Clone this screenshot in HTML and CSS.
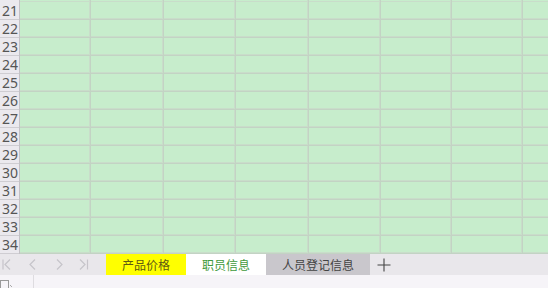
FILE: index.html
```html
<!DOCTYPE html>
<html>
<head>
<meta charset="utf-8">
<link rel="stylesheet" href="styles.css">
</head>
<body>
<div class="app">
  <div class="sheet">
    <div class="rowhead">
      <div class="hcell top"></div>
      <div class="hcell"><span>21</span></div>
      <div class="hcell"><span>22</span></div>
      <div class="hcell"><span>23</span></div>
      <div class="hcell"><span>24</span></div>
      <div class="hcell"><span>25</span></div>
      <div class="hcell"><span>26</span></div>
      <div class="hcell"><span>27</span></div>
      <div class="hcell"><span>28</span></div>
      <div class="hcell"><span>29</span></div>
      <div class="hcell"><span>30</span></div>
      <div class="hcell"><span>31</span></div>
      <div class="hcell"><span>32</span></div>
      <div class="hcell"><span>33</span></div>
      <div class="hcell"><span>34</span></div>
    </div>
    <div class="grid" id="grid"></div>
  </div>
  <div class="tabbar">
    <div class="nav">
      <svg class="navicon" width="106" height="21" viewBox="0 0 106 21">
        <g fill="none" stroke="#c6c4ca" stroke-width="1.2">
          <path d="M3 5.5 V15.5"/>
          <path d="M10 5.5 L5 10.5 L10 15.5"/>
          <path d="M35 5.5 L30 10.5 L35 15.5"/>
          <path d="M57 5.5 L62 10.5 L57 15.5"/>
          <path d="M80 5.5 L85 10.5 L80 15.5"/>
          <path d="M87.5 5.5 V15.5"/>
        </g>
      </svg>
    </div>
    <div class="tab tab-yellow">产品价格</div>
    <div class="tab tab-white">职员信息</div>
    <div class="tab tab-grey">人员登记信息</div>
    <div class="plus">
      <svg width="14" height="14" viewBox="0 0 14 14">
        <path d="M7 0.5 V13.5 M0.5 7 H13.5" stroke="#444" stroke-width="1.1" fill="none"/>
      </svg>
    </div>
  </div>
  <div class="status">
    <div class="stat-icon">
      <svg width="16" height="13" viewBox="0 0 16 13">
        <rect x="1.5" y="5.5" width="8" height="8" fill="none" stroke="#999" stroke-width="1"/>
        <path d="M11 10 L13 12" stroke="#aaa" stroke-width="1"/>
      </svg>
    </div>
    <div class="stat-div"></div>
  </div>
</div>
<script>
(function(){
  var g=document.getElementById('grid');
  var html='<div class="grow top">';
  for(var c=0;c<8;c++) html+='<div class="gcell"></div>';
  html+='</div>';
  for(var r=0;r<14;r++){
    html+='<div class="grow">';
    for(var c=0;c<8;c++) html+='<div class="gcell"></div>';
    html+='</div>';
  }
  g.innerHTML=html;
})();
</script>
</body>
</html>
```
FILE: styles.css
```css
html, body {
  margin: 0;
  padding: 0;
  width: 548px;
  height: 288px;
  overflow: hidden;
  background: #f6f4f8;
}
.app {
  width: 548px;
  height: 288px;
  display: flex;
  flex-direction: column;
  font-family: "Noto Sans", "Noto Sans CJK SC", sans-serif;
}
.sheet {
  height: 254px;
  display: flex;
  overflow: hidden;
}
.rowhead {
  width: 20px;
  flex: none;
  background: #ebe9ee;
  border-right: 1px solid #c3c1c6;
  box-sizing: border-box;
}
.hcell {
  height: 18px;
  box-sizing: border-box;
  border-bottom: 1px solid #cfcdd2;
  font-size: 14px;
  color: #555;
  white-space: nowrap;
  display: flex;
  justify-content: flex-end;
  align-items: center;
  padding-right: 1px;
}
.hcell span {
  flex: none;
  display: block;
  line-height: 15px;
  height: 15px;
}
.hcell.top, .grow.top .gcell {
  height: 2px;
  border-bottom: none;
}
.grid {
  flex: 1;
  background: #c7edcc;
  overflow: hidden;
}
.grow {
  display: grid;
  grid-template-columns: 71px 73px 72px 73px 72px 71px 71px 40px;
}
.gcell {
  height: 18px;
  box-sizing: border-box;
  border-right: 1px solid #c3d3c4;
  border-bottom: 1px solid #c3d3c4;
  box-shadow: inset 0 -1px 0 #c9ddca, inset -1px 0 0 #c9ddca;
}
.tabbar {
  height: 21px;
  flex: none;
  display: flex;
  background: #e9e7eb;
  font-family: "Noto Sans CJK SC", sans-serif;
  font-size: 12px;
}
.nav {
  width: 106px;
  flex: none;
}
.navicon { display: block; }
.tab {
  height: 21px;
  line-height: 21px;
  text-align: center;
  flex: none;
}
.tab-yellow {
  width: 80px;
  background: #ffff00;
  color: #5e5a14;
}
.tab-white {
  width: 80px;
  background: #ffffff;
  color: #3f9a3c;
}
.tab-grey {
  width: 104px;
  background: #c9c7cc;
  color: #444;
}
.plus {
  width: 24px;
  display: flex;
  align-items: center;
  justify-content: center;
  padding-left: 2px;
}
.plus svg { display: block; }
.status {
  flex: 1;
  display: flex;
  background: #f6f4f8;
}
.stat-icon {
  width: 33px;
}
.stat-icon svg { display: block; margin-left: -1px; }
.stat-div {
  width: 1px;
  height: 13px;
  background: #dedce0;
}
```
